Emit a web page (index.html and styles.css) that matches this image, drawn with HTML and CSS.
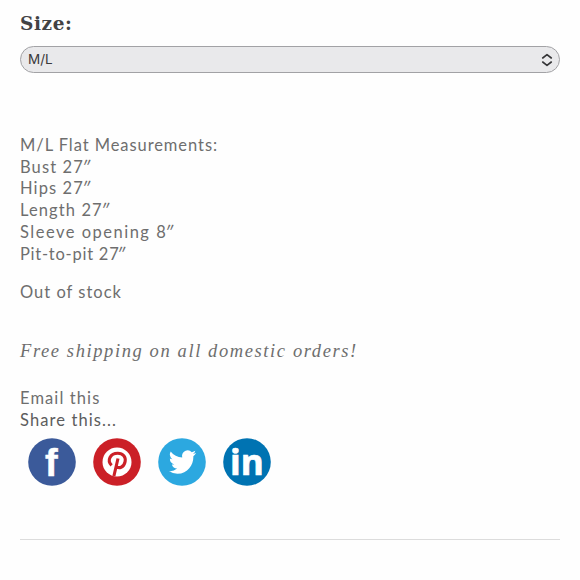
FILE: index.html
```html
<!DOCTYPE html>
<html lang="en">
<head>
    <meta charset="UTF-8">
    <meta name="viewport" content="width=device-width, initial-scale=1.0">
    <title>Product Details</title>
    <link rel="stylesheet" href="styles.css">
</head>
<body>
    <div class="product">
        <label class="size-label" for="size">Size:</label>
        <div class="size-select">
            <select id="size">
                <option>M/L</option>
            </select>
            <svg class="arrows" viewBox="0 0 12 14" width="12" height="14">
                <path d="M1.7 5 L6 1.6 L10.3 5 M1.7 9 L6 12.4 L10.3 9"/>
            </svg>
        </div>

        <div class="measurements">
            <div class="m-title">M/L Flat Measurements:</div>
            <div>Bust 27<i>″</i></div>
            <div>Hips 27<i>″</i></div>
            <div>Length 27<i>″</i></div>
            <div class="m-sleeve">Sleeve opening 8<i>″</i></div>
            <div class="m-pit">Pit-to-pit 27<i>″</i></div>
        </div>

        <p class="stock">Out of stock</p>
        <p class="shipping">Free shipping on all domestic orders!</p>

        <div class="share">
            <div>Email this</div>
            <div class="share-title">Share this...</div>
        </div>
        <div class="share-icons">
            <svg viewBox="0 0 48 48" width="48" height="48">
                <circle cx="24" cy="24" r="23.8" fill="#3b5a9a"/>
                <text class="fb" x="17" y="38">f</text>
            </svg>
            <svg viewBox="0 0 48 48" width="48" height="48">
                <circle cx="24" cy="24" r="23.8" fill="#cb2027"/>
                <circle cx="24" cy="24" r="14.5" fill="#fff"/>
                <path class="pin" d="M18.6 27.4 C13.6 22.5 17.2 15.3 24.8 15.3 C30.2 15.3 33 19 32.1 23.6 C31 29.4 25.6 31.4 23 27.8 M25 20.5 L20.9 38"/>
            </svg>
            <svg viewBox="0 0 48 48" width="48" height="48">
                <circle cx="24" cy="24" r="23.8" fill="#2ca8e0"/>
                <path transform="translate(10.8 9.6) scale(1.14 1.2)" fill="#fff" d="M23.95 4.57a10 10 0 0 1-2.82.77 4.96 4.96 0 0 0 2.16-2.72c-.95.55-2 .95-3.13 1.18a4.92 4.92 0 0 0-8.38 4.48C7.69 8.1 4.07 6.13 1.64 3.16a4.92 4.92 0 0 0 1.52 6.57 4.9 4.9 0 0 1-2.23-.61v.06a4.92 4.92 0 0 0 3.95 4.83 5 5 0 0 1-2.21.08 4.94 4.94 0 0 0 4.6 3.42A9.87 9.87 0 0 1 0 19.54a13.99 13.99 0 0 0 7.55 2.21c9.05 0 14-7.5 14-13.98 0-.21 0-.42-.02-.63a9.94 9.94 0 0 0 2.46-2.55z"/>
            </svg>
            <svg viewBox="0 0 48 48" width="48" height="48">
                <circle cx="24" cy="24" r="23.8" fill="#0073b2"/>
                <text class="in" x="7" y="37.4">in</text>
            </svg>
        </div>
        <hr>
    </div>
</body>
</html>
```
FILE: styles.css
```css
body {
    margin: 0;
    background-color: #fefefe;
    color: #6e6e6e;
    font-family: Lato, 'Liberation Sans', sans-serif;
    font-size: 16.5px;
    line-height: 21.7px;
    letter-spacing: 1px;
}

.product {
    padding: 10px 20px 0;
}

.size-label {
    display: block;
    height: 36px;
    line-height: 27px;
    color: #424244;
    font-family: 'DejaVu Serif', serif;
    font-size: 18.5px;
    font-weight: bold;
    letter-spacing: 0.6px;
}

.size-select {
    display: flex;
    align-items: center;
    box-sizing: border-box;
    height: 27px;
    padding: 0 6px 0 7px;
    border: 1px solid #a2a2a5;
    border-radius: 14px;
    background-color: #e9e9eb;
}

select {
    flex: 1;
    appearance: none;
    padding: 0 0 1px;
    border: none;
    background: none;
    color: #3a3a3c;
    font-family: Inter, sans-serif;
    font-size: 13.5px;
}

.arrows {
    fill: none;
    stroke: #363638;
    stroke-width: 1.6;
    stroke-linecap: round;
    stroke-linejoin: round;
}

.measurements {
    margin-top: 62px;
    letter-spacing: 1.1px;
}

.measurements i {
    display: inline-block;
    margin-left: -2px;
    font-style: normal;
    transform: skewX(-8deg);
}

.m-title {
    letter-spacing: 0.93px;
}

.m-sleeve {
    letter-spacing: 1.5px;
}

.m-pit {
    letter-spacing: 0.75px;
}

.stock {
    margin: 17px 0 0;
}

.shipping {
    margin: 37px 0 0;
    font-family: 'Liberation Serif', serif;
    font-size: 18.5px;
    font-style: italic;
    letter-spacing: 1.6px;
}

.share {
    margin-top: 25px;
    letter-spacing: 1.1px;
}

.share-title {
    margin-top: 0.5px;
    color: #5c5c5c;
}

.share-icons {
    display: flex;
    gap: 17px;
    margin: 6px 0 0 8px;
}

.fb {
    fill: #fff;
    font-family: 'Liberation Sans', sans-serif;
    font-size: 38px;
    font-weight: bold;
    letter-spacing: 0;
    stroke: #fff;
    stroke-width: 0.5;
}

.in {
    fill: #fff;
    font-family: 'Open Sans', sans-serif;
    font-size: 35px;
    font-weight: bold;
    letter-spacing: 0;
    stroke: #fff;
    stroke-width: 0.7;
}

.pin {
    fill: none;
    stroke: #cb2027;
    stroke-width: 3.1;
}

hr {
    height: 1px;
    margin: 53px 0 0;
    border: none;
    background-color: #dcdcdc;
}
```
